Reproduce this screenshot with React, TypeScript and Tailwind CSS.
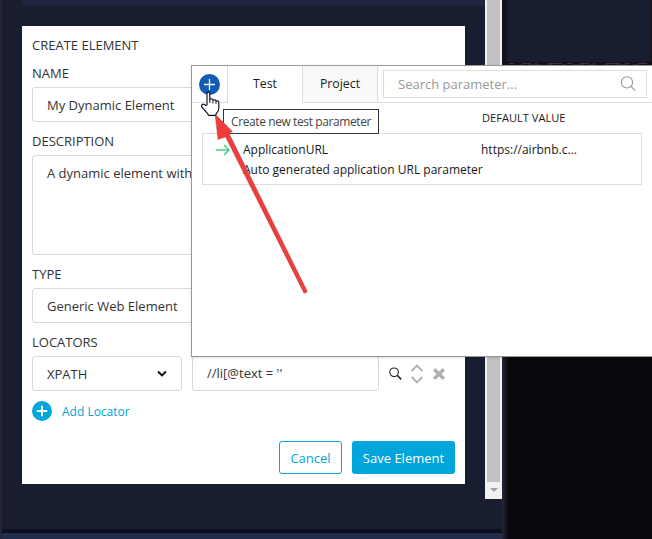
import React from "react";

function Label({ children, className = "" }: { children: React.ReactNode; className?: string }) {
  return <div className={`h-[18px] shrink-0 leading-[18px] ${className}`}>{children}</div>;
}

function PlusDisc({ className, thick }: { className: string; thick: number }) {
  return (
    <svg viewBox="0 0 20 20" className={className}>
      <circle cx="10" cy="10" r="10" fill="currentColor" />
      <path d="M10 4.8v10.4M4.8 10h10.4" stroke="#fff" strokeWidth={thick} />
    </svg>
  );
}

function ElementForm() {
  return (
    <div className="mt-5 flex h-[458px] w-[443px] shrink-0 flex-col bg-white px-2.5 pt-2.5 text-[#333]">
      <Label>CREATE ELEMENT</Label>
      <Label className="mt-2.5">NAME</Label>
      <div className="mt-[5px] h-[35px] shrink-0 rounded-[3px] border border-[#d9d9d9] pl-3.5 leading-[35px]">My Dynamic Element</div>
      <Label className="mt-2.5">DESCRIPTION</Label>
      <div className="mt-[5px] h-[100px] shrink-0 rounded-[3px] border border-[#d9d9d9] pl-3.5 pt-2 leading-[18px]">A dynamic element with</div>
      <Label className="mt-2.5">TYPE</Label>
      <div className="mt-[5px] h-[35px] shrink-0 rounded-[3px] border border-[#d9d9d9] pl-3.5 leading-[35px]">Generic Web Element</div>
      <Label className="mt-2.5">LOCATORS</Label>
      <div className="mt-[5px] flex h-[35px] shrink-0 items-center">
        <div className="flex h-full w-[150px] items-center justify-between rounded-[3px] border border-[#d9d9d9] pl-3.5 pr-3.5 pt-[3px]">
          <span>XPATH</span>
          <svg viewBox="0 0 10 8" className="h-2 w-2.5 -translate-y-px"><path d="M1 1.5 5 5.5l4-4" fill="none" stroke="#111" strokeWidth="1.9" /></svg>
        </div>
        <div className="ml-2.5 h-full w-[187px] rounded-[3px] border border-[#d9d9d9] pl-3.5 leading-[33px]">//li[@text = ''</div>
        <svg viewBox="0 0 14 14" className="ml-2.5 h-3.5 w-3.5" fill="none" stroke="#222">
          <circle cx="5.1" cy="5.3" r="4.3" strokeWidth="1.1" /><path d="m8.2 8.4 4 4" strokeWidth="1.5" />
        </svg>
        <svg viewBox="0 0 12 20" className="ml-2 h-5 w-3" fill="none" stroke="#b0b0b0" strokeWidth="1.9">
          <path d="m.7 7 5.3-5.3L11.3 7M.7 13 6 18.3l5.3-5.3" />
        </svg>
        <svg viewBox="0 0 12 12" className="ml-2.5 h-3 w-3" stroke="#b0b0b0" strokeWidth="3.4"><path d="m1.2 1.2 9.6 9.6m0-9.6-9.6 9.6" /></svg>
      </div>
      <div className="mt-2.5 flex h-5 shrink-0 items-center gap-2.5 text-[#00a5dc]">
        <PlusDisc className="h-5 w-5" thick={2} />
        <span className="pt-px text-[12px]">Add Locator</span>
      </div>
      <div className="mt-5 flex h-[33px] shrink-0 justify-end gap-2.5 text-[13px]">
        <div className="flex w-[63px] items-center justify-center rounded-[3px] border border-[#00a5dc] pt-[3px] text-[#00a5dc]">Cancel</div>
        <div className="flex w-[103px] items-center justify-center rounded-[3px] bg-[#00a5dc] pt-[3px] font-medium text-white">Save Element</div>
      </div>
    </div>
  );
}

function ParameterPopup() {
  return (
    <div className="absolute left-[191px] top-[65px] h-[292px] w-[470px] border border-[#999] bg-white text-[#1a1a1a] shadow-sm">
      <div className="flex h-[37px] text-[12.3px]">
        <div className="flex w-9 items-center justify-center border-b border-r border-[#ddd]">
          <PlusDisc className="h-[21px] w-[21px] text-[#135cb3]" thick={1.2} />
        </div>
        <div className="w-[74px] text-center leading-[36px]">Test</div>
        <div className="w-[76px] border-b border-l border-r border-[#ddd] bg-[#f9f9f9] text-center leading-[36px]">Project</div>
        <div className="flex w-[280px] border-b border-[#ddd] pl-[5px] pt-1">
          <div className="flex h-7 w-[264px] items-center justify-between border border-[#ddd] pl-3.5 pr-2.5 text-[13px] text-[#999]">
            <span className="pt-px">Search parameter...</span>
            <svg viewBox="0 0 16 16" className="h-4 w-4" fill="none" stroke="#999" strokeWidth="1.1"><circle cx="7" cy="6.4" r="5.6" /><path d="m11 10.4 4.2 4.2" /></svg>
          </div>
        </div>
      </div>
      <div className="flex h-[30px] items-center pl-[290px] text-[11.1px]">DEFAULT VALUE</div>
      <div className="ml-2.5 flex h-[52px] w-[440px] flex-col border border-[#ddd] text-[12px]">
        <div className="mt-[6px] flex h-[19px] items-center">
          <svg viewBox="0 0 16 12" className="ml-3 h-3 w-4" fill="none" stroke="#48cf85" strokeWidth="1.5"><path d="M1 6h13M9 1l5 5-5 5" /></svg>
          <span className="ml-3 w-[238px]">ApplicationURL</span>
          <span>https://airbnb.c...</span>
        </div>
        <div className="pl-10 pt-px leading-[19px]">Auto generated application URL parameter</div>
      </div>
    </div>
  );
}

export default function App() {
  return (
    <div className="relative flex h-[539px] w-[652px] overflow-hidden bg-[#09080d] font-['Open_Sans',sans-serif] text-[13px]">
      <div className="w-0.5 shrink-0 bg-[#2a2333]" />
      <div className="flex w-[500px] shrink-0 flex-col bg-[#181d30]">
        <div className="flex h-[499px] justify-between">
          <div className="flex flex-col pl-5">
            <div className="h-1.5 w-[463px] shrink-0 bg-[#1e253f]" />
            <ElementForm />
          </div>
          <div className="-ml-5 flex w-[17px] flex-col items-center bg-[#f1f1f1]">
            <div className="h-[482px] w-[13px] bg-[#c1c1c1]" />
            <div className="mt-[6px] h-0 w-0 border-x-4 border-t-4 border-x-transparent border-t-[#a0a0a0]" />
          </div>
        </div>
        <div className="mt-[30px] h-1 bg-[#0d111e]" />
        <div className="h-1.5 bg-[#232d49]" />
      </div>
      <div className="flex w-[150px] shrink-0 flex-col bg-linear-to-r from-[#2b2638] to-[#09080d] to-[7px]">
        <div className="h-[66px] bg-[#16121b] pl-[5px]">
          <div className="h-[62px] w-[144px] bg-[#181d30]" />
          <svg viewBox="0 0 144 4" className="block h-1 w-36" stroke="#3d3648" fill="none">
            <path d="M2 1.5h145" strokeDasharray="5 8 9 4 2 11 14 5" /><path d="M12 3h130" strokeDasharray="3 7 12 6 6 9" />
          </svg>
        </div>
      </div>
      <ParameterPopup />
      <div className="absolute left-[223px] top-[109px] h-[25px] w-[156px] whitespace-nowrap border border-[#333] bg-white pl-[7px] text-[12px] leading-[24px] tracking-[-0.4px] text-[#444]">Create new test parameter</div>
      <svg viewBox="0 0 652 539" className="pointer-events-none absolute inset-0 h-full w-full">
        <path d="m215 114 17.5 17.5-3.5 1.7 78.3 158q-.8 2.2-3.4 2L225.5 137l-7.5 2.5Z" fill="#f23c3c" stroke="#8a5555" strokeWidth=".4" />
        <path d="M207 105V93.8q0-1.6 1.4-1.6t1.4 1.6v5.4q2.8-.8 3.2.8 2.5-.8 3 .9 2.8-.6 2.8 2v5.3q0 3-2.3 5.1l-.8 2h-7.2l-1.3-2.2-5-5.6q-1.4-1.9.1-3 1.5-1 3.4 1Z" fill="#fff" stroke="#111827" strokeWidth="1.2" strokeLinejoin="round" />
        <path d="M209.8 99v4m3.2-3v3.5m3-2.6v3" stroke="#111827" fill="none" />
      </svg>
    </div>
  );
}
